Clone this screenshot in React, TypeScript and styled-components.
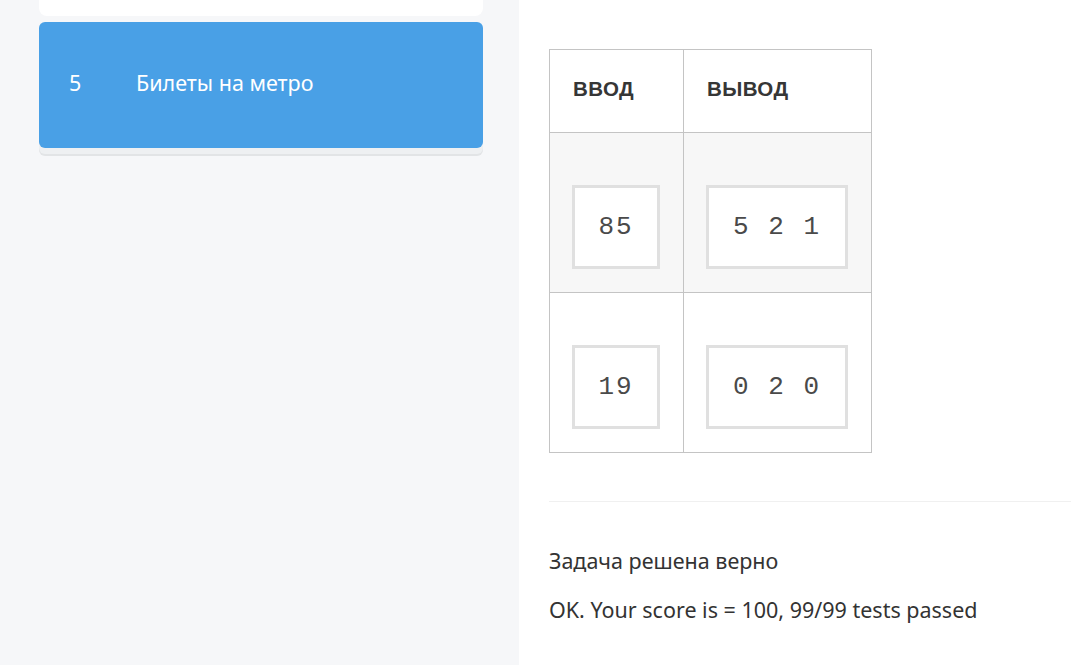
import React from "react";
import styled, { createGlobalStyle } from "styled-components";

const Global = createGlobalStyle`
  html, body { margin: 0; padding: 0; background: #ffffff; }
  body { font-family: "Noto Sans", "Open Sans", sans-serif; color: #333333; }
  * { box-sizing: border-box; }
`;

const Page = styled.div`
  display: grid;
  grid-template-columns: 519px 1fr;
  width: 1071px;
  height: 665px;
  overflow: hidden;
`;

const Sidebar = styled.aside`
  background: #f6f7f9;
  padding: 0 36px 0 39px;
  display: flex;
  flex-direction: column;
  gap: 6px;
  margin-top: -10px;
`;

const Card = styled.div<{ $active?: boolean }>`
  display: flex;
  align-items: center;
  height: 126px;
  padding: 0 0 5px 30px;
  border-radius: 6px;
  background: ${(p) => (p.$active ? "#49a0e6" : "#ffffff")};
  color: ${(p) => (p.$active ? "#ffffff" : "#333333")};
  box-shadow: ${(p) => (p.$active ? "0 6px 0 #eef0f2, 0 8px 0 #e2e4e6" : "none")};
  font-size: 21.5px;
  line-height: 28px;
`;

const TopCard = styled(Card)`
  height: 26px;
  border-radius: 0 0 8px 8px;
`;

const Num = styled.span`
  width: 67px;
  flex: none;
`;

const Main = styled.main`
  padding: 49px 0 0 30px;
  display: flex;
  flex-direction: column;
`;

const Table = styled.table`
  border-collapse: collapse;
  width: 323px;
`;

const Th = styled.th<{ $w: number }>`
  width: ${(p) => p.$w}px;
  height: 83px;
  border: 1px solid #c4c4c4;
  text-align: left;
  padding: 0 0 4px 23px;
  font-family: "Liberation Sans", Arial, sans-serif;
  font-weight: 700;
  font-size: 20.5px;
  text-transform: uppercase;
  color: #363636;
  letter-spacing: 0.4px;
`;

const Tr = styled.tr<{ $shade?: boolean }>`
  background: ${(p) => (p.$shade ? "#f7f7f7" : "#ffffff")};
`;

const Td = styled.td`
  height: 160px;
  border: 1px solid #c4c4c4;
  padding: 52px 23px 23px 22px;
  vertical-align: top;
`;

const CodeBox = styled.div<{ $w: number }>`
  width: ${(p) => p.$w}px;
  height: 84px;
  border: 3px solid #e0e0e0;
  background: #ffffff;
  display: flex;
  align-items: center;
  justify-content: center;
  font-family: "Liberation Mono", "Courier New", monospace;
  font-size: 26px;
  color: #4a4a4a;
  white-space: pre;
  letter-spacing: 2px;
`;

const Divider = styled.hr`
  border: 0;
  border-top: 1px solid #f0f0f0;
  margin: 48px 0 0 0;
  width: 100%;
`;

const Result = styled.div`
  margin-top: 44px;
  display: flex;
  flex-direction: column;
  gap: 19px;
  font-size: 21.5px;
  color: #333333;
  line-height: 30px;
`;

const rows = [
  { input: "85", output: "5 2 1" },
  { input: "19", output: "0 2 0" },
];

export default function App() {
  return (
    <>
      <Global />
      <Page>
        <Sidebar>
          <TopCard />
          <Card $active>
            <Num>5</Num>
            <span>Билеты на метро</span>
          </Card>
        </Sidebar>
        <Main>
          <Table>
            <thead>
              <tr>
                <Th $w={134}>ввод</Th>
                <Th $w={189}>вывод</Th>
              </tr>
            </thead>
            <tbody>
              {rows.map((r, i) => (
                <Tr key={i} $shade={i === 0}>
                  <Td>
                    <CodeBox $w={88}>{r.input}</CodeBox>
                  </Td>
                  <Td>
                    <CodeBox $w={142}>{r.output}</CodeBox>
                  </Td>
                </Tr>
              ))}
            </tbody>
          </Table>
          <Divider />
          <Result>
            <div>Задача решена верно</div>
            <div>OK. Your score is = 100, 99/99 tests passed</div>
          </Result>
        </Main>
      </Page>
    </>
  );
}
